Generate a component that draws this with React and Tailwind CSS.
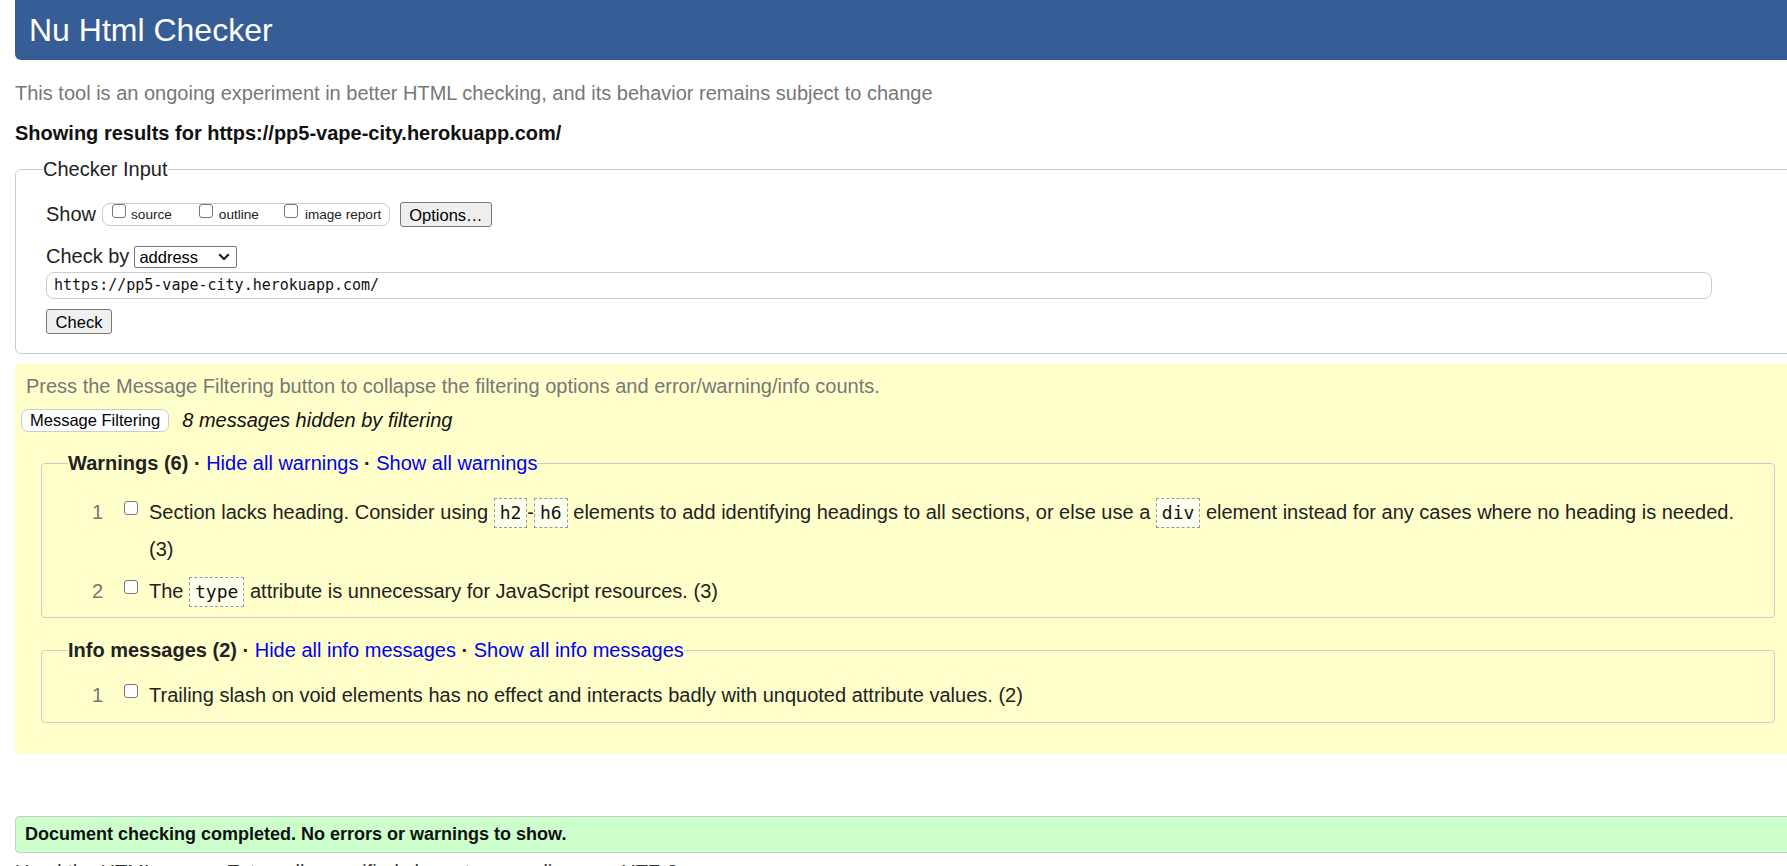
import React from "react";

function Box({ className = "" }) {
  return (
    <span
      className={
        "inline-block w-[14px] h-[14px] border border-[#767676] rounded-[3px] bg-white shrink-0 " +
        className
      }
    />
  );
}

function Code({ children }) {
  return (
    <code className="inline-block align-middle border border-dashed border-[#999] bg-[#ffffee] px-[5px] leading-[28px] font-['DejaVu_Sans_Mono',monospace] text-[18px] text-[#111]">
      {children}
    </code>
  );
}

function Item({ n, children }) {
  return (
    <li className="flex items-start leading-[37px]">
      <span className="w-[35px] text-right text-[#777] shrink-0">{n}</span>
      <Box className="ml-[21px] mt-[7px]" />
      <div className="ml-[11px] text-[#222]">{children}</div>
    </li>
  );
}

export default function App() {
  return (
    <div className="w-full h-[866px] overflow-hidden bg-white font-['Liberation_Sans',Arial,sans-serif] text-[20px] text-[#222]">
      <div className="w-[1786px] ml-[15px]">
        <header className="h-[60px] bg-[#365d95] rounded-b-[6px] flex items-center pl-[14px]">
          <h1 className="text-[32px] leading-none text-white">Nu Html Checker</h1>
        </header>

        <p className="mt-[22px] leading-[23px] text-[#777]">
          This tool is an ongoing experiment in better HTML checking, and its behavior remains subject to change
        </p>
        <p className="mt-[17px] leading-[23px] font-bold text-[#111]">
          Showing results for https://pp5-vape-city.herokuapp.com/
        </p>

        <fieldset className="mt-[13px] border border-[#ccc] rounded-[6px] pl-[27px] pb-[17px]">
          <legend className="leading-[23px] text-[#222]">Checker Input</legend>
          <div className="pl-[3px] pt-[21px]">
            <div className="flex items-center h-[25px]">
              <span className="leading-[23px]">Show</span>
              <div className="ml-[6px] flex items-start h-[23px] border border-[#ccc] rounded-[8px] pl-[9px] pr-[8px] text-[13.6px] leading-[16px] text-[#222]">
                <Box className="w-[13px] h-[13px]" />
                <span className="ml-[5px] mt-[3px]">source</span>
                <Box className="ml-[27px] w-[13px] h-[13px]" />
                <span className="ml-[6px] mt-[3px]">outline</span>
                <Box className="ml-[25px] w-[13px] h-[13px]" />
                <span className="ml-[7px] mt-[3px]">image report</span>
              </div>
              <button className="ml-[10px] h-[25px] px-[8px] bg-[#efefef] border border-[#767676] rounded-[3px] text-[16.5px] leading-[20px] text-black">
                Options…
              </button>
            </div>

            <div className="mt-[19px] flex items-center h-[21px]">
              <span className="leading-[23px]">Check by</span>
              <div className="ml-[5px] w-[103px] h-[22px] border border-[#767676] rounded-[2px] bg-white flex items-center justify-between pl-[4px] pr-[6px] text-[16.5px] leading-[20px] text-black">
                <span>address</span>
                <svg width="12" height="8" viewBox="0 0 12 8" className="mt-[1px]">
                  <polyline points="1.2,1.2 6,6 10.8,1.2" fill="none" stroke="#111" strokeWidth="2" />
                </svg>
              </div>
            </div>

            <div className="mt-[5px] w-[1666px] h-[27px] border border-[#ccc] rounded-[8px] flex items-center pl-[7px] font-['DejaVu_Sans_Mono',monospace] text-[15px] text-[#111]">
              https://pp5-vape-city.herokuapp.com/
            </div>

            <button className="mt-[10px] h-[25px] w-[66px] bg-[#efefef] border border-[#767676] rounded-[3px] text-[16.5px] leading-[20px] text-black">
              Check
            </button>
          </div>
        </fieldset>

        <div className="mt-[10px] bg-[#ffffcc] px-[6px] pt-[11px] pb-[31px]">
          <p className="pl-[5px] leading-[23px] text-[#777]">
            Press the Message Filtering button to collapse the filtering options and error/warning/info counts.
          </p>
          <div className="mt-[11px] flex items-center">
            <button className="h-[23px] px-[8px] bg-white border border-[#ccc] rounded-[7px] text-[16.5px] leading-[20px] text-black">
              Message Filtering
            </button>
            <span className="ml-[13px] italic leading-[23px] text-[#111]">8 messages hidden by filtering</span>
          </div>

          <fieldset className="mt-[20px] mx-[20px] border border-[#ccc] rounded-[4px] pl-[26px] pr-[26px] pb-[7px]">
            <legend className="leading-[23px]">
              <span className="font-bold text-[#222]">Warnings (6) ·</span>
              <span> </span>
              <span className="text-[#0000ee]">Hide all warnings</span>
              <span className="font-bold"> · </span>
              <span className="text-[#0000ee]">Show all warnings</span>
            </legend>
            <ol className="pt-[19px] flex flex-col gap-[5px]">
              <Item n="1">
                <span className="whitespace-nowrap">
                  Section lacks heading. Consider using <Code>h2</Code>-<Code>h6</Code> elements to add identifying
                  headings to all sections, or else use a <Code>div</Code> element instead for any cases where no
                  heading is needed.
                </span>
                <br />
                (3)
              </Item>
              <Item n="2">
                The <Code>type</Code> attribute is unnecessary for JavaScript resources. (3)
              </Item>
            </ol>
          </fieldset>

          <fieldset className="mt-[21px] mx-[20px] border border-[#ccc] rounded-[4px] pl-[26px] pr-[26px] pb-[8px]">
            <legend className="leading-[23px]">
              <span className="font-bold text-[#222]">Info messages (2) ·</span>
              <span> </span>
              <span className="text-[#0000ee]">Hide all info messages</span>
              <span className="font-bold"> · </span>
              <span className="text-[#0000ee]">Show all info messages</span>
            </legend>
            <ol className="pt-[15px]">
              <Item n="1">
                Trailing slash on void elements has no effect and interacts badly with unquoted attribute values. (2)
              </Item>
            </ol>
          </fieldset>
        </div>

        <div className="mt-[62px] h-[37px] bg-[#ccffcc] border border-[#ccc] rounded-[4px] flex items-center pl-[9px] text-[18px] font-bold text-[#111]">
          Document checking completed. No errors or warnings to show.
        </div>
        <p className="mt-[8px] leading-[23px] text-[#333]">
          Used the HTML parser. Externally specified character encoding was UTF-8.
        </p>
        <p className="leading-[23px] text-[#333]">Total execution time 443 milliseconds.</p>
      </div>
    </div>
  );
}
